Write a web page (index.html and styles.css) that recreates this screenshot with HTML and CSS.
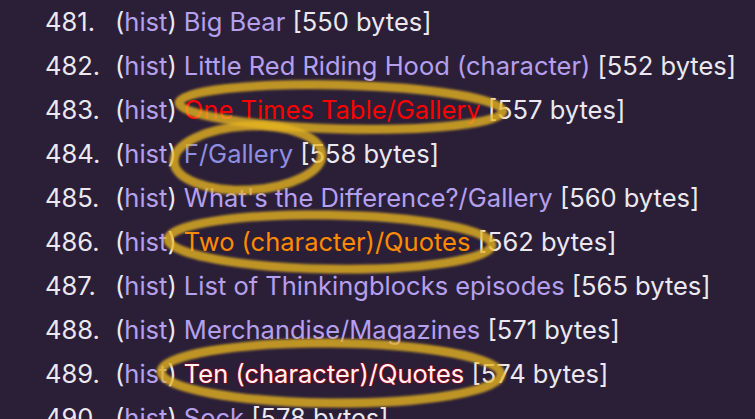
FILE: index.html
```html
<!DOCTYPE html>
<html lang="en">
<head>
    <meta charset="UTF-8">
    <meta name="viewport" content="width=device-width, initial-scale=1.0">
    <title>Short pages</title>
    <link rel="stylesheet" href="styles.css">
</head>
<body>
    <div class="page">
        <ol class="pages" start="481">
            <li>(<a class="hist">hist</a>) <a class="title">Big Bear</a> [550 bytes]</li>
            <li>(<a class="hist">hist</a>) <a class="title">Little Red Riding Hood (character)</a> [552 bytes]</li>
            <li>(<a class="hist">hist</a>) <a class="title red">One Times Table/Gallery</a> [557 bytes]</li>
            <li>(<a class="hist">hist</a>) <a class="title visited">F/Gallery</a> [558 bytes]</li>
            <li>(<a class="hist">hist</a>) <a class="title">What's the Difference?/Gallery</a> [560 bytes]</li>
            <li>(<a class="hist">hist</a>) <a class="title orange">Two (character)/Quotes</a> [562 bytes]</li>
            <li>(<a class="hist">hist</a>) <a class="title">List of Thinkingblocks episodes</a> [565 bytes]</li>
            <li>(<a class="hist">hist</a>) <a class="title">Merchandise/Magazines</a> [571 bytes]</li>
            <li>(<a class="hist">hist</a>) <a class="title glow">Ten (character)/Quotes</a> [574 bytes]</li>
            <li>(<a class="hist">hist</a>) <a class="title">Sock</a> [578 bytes]</li>
        </ol>

        <!-- marker circles someone drew over the screenshot -->
        <svg class="marks" width="755" height="419" viewBox="0 0 755 419">
            <ellipse cx="341" cy="107" rx="162" ry="22" transform="rotate(1.5 341 107)"/>
            <ellipse cx="248" cy="158" rx="74" ry="32" transform="rotate(-3 248 158)"/>
            <ellipse cx="330" cy="242" rx="162" ry="27" transform="rotate(1 330 242)"/>
            <ellipse cx="331" cy="373" rx="170" ry="30" transform="rotate(0.5 331 373)"/>
        </svg>
    </div>
</body>
</html>
```

FILE: styles.css
```css
body {
    margin: 0;
    background-color: #2b1f38;
    font-family: Inter, "Noto Sans", sans-serif;
    overflow: hidden;
}

.page {
    position: relative;
    height: 419px;
    overflow: hidden;
}

.pages {
    list-style: none;
    margin: 0;
    padding: 0 0 0 45px;
    font-size: 25.5px;
    line-height: 44px;
    color: #ece8f0;
}

.pages li {
    white-space: nowrap;
}

.pages li::before {
    content: counter(list-item) ".";
    display: inline-block;
    width: 70px;
}

.hist,
.title {
    color: #b5a0ee;
    text-decoration: none;
}

.title.red {
    color: #ff0000;
}

.title.visited {
    color: #8f8fe2;
}

.title.orange {
    color: #ff8a00;
}

.title.glow {
    color: #fff2f2;
    text-shadow: 0 0 1px #c00018, 0 0 1px #c00018, 0 0 1px #c00018, 0 0 2px #a00010;
}

.marks {
    position: absolute;
    top: 0;
    left: 0;
    pointer-events: none;
}

.marks ellipse {
    fill: none;
    stroke: rgba(232, 182, 32, 0.78);
    stroke-width: 9;
    filter: blur(0.8px);
}
```
